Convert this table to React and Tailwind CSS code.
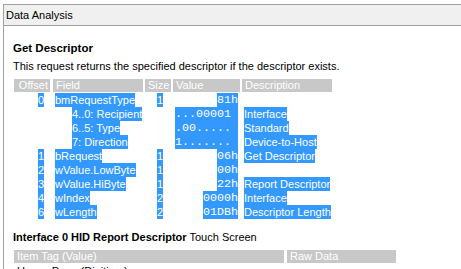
import React from "react";

const rows = [
  { off: "0", field: "bmRequestType", size: "1", value: "81h", desc: "" },
  { sub: true, field: "4..0: Recipient", bits: "...00001", desc: "Interface" },
  { sub: true, field: "6..5: Type", bits: ".00.....", desc: "Standard" },
  { sub: true, field: "7: Direction", bits: "1.......", desc: "Device-to-Host" },
  { off: "1", field: "bRequest", size: "1", value: "06h", desc: "Get Descriptor" },
  { off: "2", field: "wValue.LowByte", size: "1", value: "00h", desc: "" },
  { off: "3", field: "wValue.HiByte", size: "1", value: "22h", desc: "Report Descriptor" },
  { off: "4", field: "wIndex", size: "2", value: "0000h", desc: "Interface" },
  { off: "6", field: "wLength", size: "2", value: "01DBh", desc: "Descriptor Length" },
];

function Sel({ children, className = "" }) {
  return <span className={`inline-block h-[14px] bg-[#3399ff] text-white ${className}`}>{children}</span>;
}

export default function App() {
  return (
    <div className="w-[461px] h-[269px] overflow-hidden bg-white pt-[4px] pl-[3px] font-['Liberation_Sans',Arial,sans-serif] text-[11px] text-black">
      <div className="h-full border-l border-t border-[#a0a0a0]">
        {/* Title bar */}
        <div className="h-[21px] bg-[#f0f0f0] border-b border-[#a0a0a0] pl-[2px] leading-[20px] text-[11px] text-black">
          Data Analysis
        </div>

        <div className="pl-[10px]">
          {/* Get Descriptor */}
          <div className="mt-[15px] -ml-[1px] text-[11.5px] leading-[14px] font-bold">Get Descriptor</div>
          <div className="mt-[5px] -ml-[1px] leading-[13px]">
            This request returns the specified descriptor if the descriptor exists.
          </div>

          {/* Table header */}
          <div className="mt-[6px] flex h-[13px] leading-[13px] text-white">
            <div className="w-[36px] bg-[#c8c8c8] text-right pr-[2px]">Offset</div>
            <div className="ml-[3px] w-[90px] bg-[#c8c8c8] pl-[3px]">Field</div>
            <div className="ml-[2px] w-[26px] bg-[#c8c8c8] pl-[3px]">Size</div>
            <div className="ml-[2px] w-[67px] bg-[#c8c8c8] pl-[3px]">Value</div>
            <div className="ml-[2px] w-[90px] bg-[#c8c8c8] pl-[3px]">Description</div>
          </div>

          {/* Rows */}
          <div className="mt-[1px]">
            {rows.map((r, i) => (
              <div key={i} className="flex h-[14px] leading-[14px] whitespace-nowrap">
                <div className="w-[36px] text-right pr-[6px]">{r.off && <Sel>{r.off}</Sel>}</div>
                <div className={`ml-[3px] w-[90px] ${r.sub ? "pl-[19px]" : "pl-[2px]"}`}>
                  <Sel>{r.field}</Sel>
                </div>
                <div className="ml-[2px] w-[26px] pl-[12px]">{r.size && <Sel>{r.size}</Sel>}</div>
                <div className="ml-[2px] w-[67px] px-[2px] font-['Liberation_Mono',monospace] text-[11.67px]">
                  {r.bits ? (
                    <Sel className="w-full text-left">{r.bits}</Sel>
                  ) : (
                    <div className="text-right">
                      <Sel>{r.value}</Sel>
                    </div>
                  )}
                </div>
                <div className="ml-[2px] w-[90px] pl-[2px]">{r.desc && <Sel>{r.desc}</Sel>}</div>
              </div>
            ))}
          </div>

          {/* Interface 0 */}
          <div className="mt-[11px] -ml-[1px] text-[11px] leading-[14px]">
            <span className="font-bold">Interface 0 HID Report Descriptor</span> Touch Screen
          </div>
          <div className="mt-[6px] flex h-[13px] leading-[13px] text-white">
            <div className="w-[270px] bg-[#c8c8c8] pl-[3px]">Item Tag (Value)</div>
            <div className="ml-[3px] w-[109px] bg-[#c8c8c8] pl-[3px]">Raw Data</div>
          </div>
          <div className="mt-[1px] flex h-[14px] leading-[14px]">
            <div className="w-[270px] pl-[3px]">Usage Page (Digitizer)</div>
            <div className="ml-[3px] w-[109px] pl-[3px]"></div>
          </div>
        </div>
      </div>
    </div>
  );
}
